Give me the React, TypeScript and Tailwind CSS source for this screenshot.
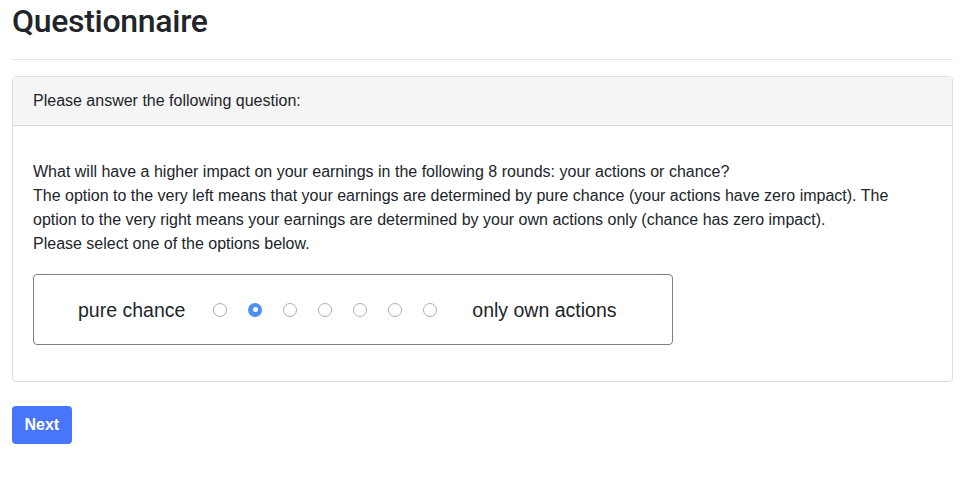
export default function App() {
  const options = [0, 1, 2, 3, 4, 5, 6];
  const selected = 1;
  return (
    <div className="min-h-screen bg-white px-3 text-[#212529] [font-family:'Liberation_Sans',Arial,sans-serif]">
      <h2 className="pt-[1px] text-[32px] font-medium leading-[40px] tracking-[-0.3px] [font-family:Roboto,'Liberation_Sans',sans-serif]">
        Questionnaire
      </h2>
      <hr className="mt-[18px] border-t border-[#e5e5e5]" />
      <div className="mt-4 rounded border border-[#dfdfdf]">
        <div className="h-[49px] border-b border-[#dadada] bg-[#f5f5f5] px-5 text-[16px] leading-[48px]">
          Please answer the following question:
        </div>
        <div className="px-5 pb-9 pt-[34px] text-[16px] leading-6">
          <p>
            What will have a higher impact on your earnings in the following 8
            rounds: your actions or chance?
            <br />
            The option to the very left means that your earnings are determined
            by pure chance (your actions have zero impact). The option to the
            very right means your earnings are determined by your own actions
            only (chance has zero impact).
            <br />
            Please select one of the options below.
          </p>
          <div className="mt-[18px] flex h-[71px] w-[640px] items-center rounded border border-[#7a8189] pl-[44px]">
            <span className="text-[19.5px]">pure chance</span>
            <div className="ml-[28px] flex gap-[21px]">
              {options.map((o) => (
                <span
                  key={o}
                  className={
                    o === selected
                      ? "flex h-[14px] w-[14px] items-center justify-center rounded-full bg-[#4d8ff7]"
                      : "h-[14px] w-[14px] rounded-full border border-[#aeaeae] bg-white"
                  }
                >
                  {o === selected && (
                    <span className="h-[5px] w-[5px] rounded-full bg-white" />
                  )}
                </span>
              ))}
            </div>
            <span className="ml-[35px] text-[19.5px]">only own actions</span>
          </div>
        </div>
      </div>
      <button className="mt-6 h-[38px] rounded bg-[#4775fb] px-[12.5px] text-[16px] font-bold text-white">
        Next
      </button>
    </div>
  );
}
